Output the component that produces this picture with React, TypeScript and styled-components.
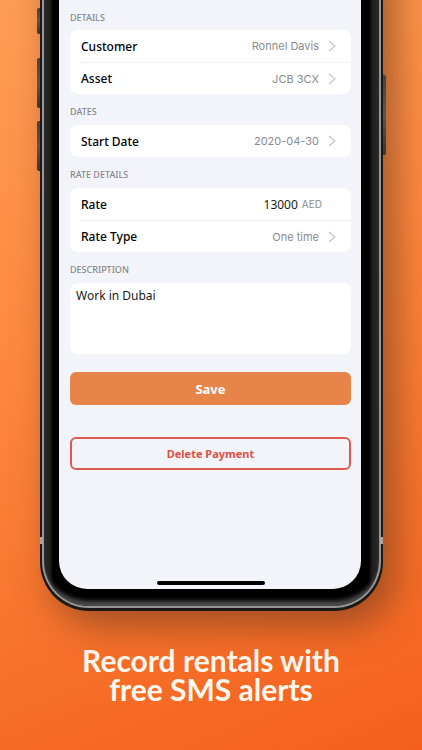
import React from "react";
import styled, { createGlobalStyle } from "styled-components";

const GlobalStyle = createGlobalStyle`
  *, *::before, *::after { box-sizing: border-box; }
  body { margin: 0; background: #f4651f; }
  button, input, textarea { font: inherit; color: inherit; margin: 0; }
`;

const labelFont = `"Noto Sans", "Open Sans", sans-serif`;
const valueFont = `Inter, "Liberation Sans", sans-serif`;

const Page = styled.main`
  min-height: 100vh;
  overflow: hidden;
  background: linear-gradient(158deg, #ff9d54 0%, #fd873c 42%, #f76f29 76%, #f4601c 100%);
  font-family: ${labelFont};
`;

/* The body runs on past the top of the page, so its shadow does too. */
const Phone = styled.div`
  position: relative;
  margin: -60px 39px 0 40px;
  padding: 60px 2px 3px;
  border-radius: 0 0 49px 49px;
  background: #1b1816;
  box-shadow: 12px 14px 36px 0 rgba(120, 64, 32, 0.68);
`;

const Rail = styled.div`
  padding: 0 2px 2px;
  border-radius: 0 0 47px 47px;
  background: #969696;
`;

const Bezel = styled.div`
  padding: 0 18px 17px 15px;
  border-radius: 0 0 45px 45px;
  background: linear-gradient(
    to right,
    #2a2a2a 0,
    #1e1e1e 6px,
    #000 9px,
    #000 calc(100% - 10px),
    #1e1e1e calc(100% - 7px),
    #2a2a2a 100%
  );
  box-shadow: inset 0 -9px 4px -4px #4c4c4c;
`;

const Screen = styled.div`
  padding: 0 10px 4px 11px;
  border-radius: 0 0 28px 28px;
  background: #f3f4f9;
`;

const SideButton = styled.span<{ $side: "left" | "right"; $top: number; $length: number }>`
  position: absolute;
  ${({ $side }) => $side}: -3px;
  top: ${({ $top }) => $top + 60}px;
  width: 3px;
  height: ${({ $length }) => $length}px;
  border-radius: ${({ $side }) => ($side === "left" ? "2px 0 0 2px" : "0 2px 2px 0")};
  background: linear-gradient(#45413e, #5a5653 50%, #38332f);
`;

const AntennaBand = styled.span<{ $side: "left" | "right" }>`
  position: absolute;
  ${({ $side }) => $side}: 0;
  bottom: 67px;
  width: 3px;
  height: 7px;
  background: #a9a5a1;
`;

const Heading = styled.h2`
  margin: 0;
  padding-top: 11px;
  height: 31px;
  font-size: 9px;
  line-height: 13px;
  font-weight: 500;
  color: #85868c;
`;

const FirstHeading = styled(Heading)`
  height: 30px;
`;

const Card = styled.div`
  padding-left: 11px;
  border-radius: 8px;
  background: #fff;
`;

const rowStyles = `
  display: flex;
  align-items: center;
  width: 100%;
  height: 32px;
  padding: 0 15px 0 0;
  border: 0;
  background: none;
  text-align: left;
  & + & { border-top: 1px solid #eeeef1; }
`;

const RowButton = styled.button`
  ${rowStyles}
  cursor: pointer;
`;

const RowField = styled.label`
  ${rowStyles}
  & + ${RowButton} { border-top: 1px solid #eeeef1; }
`;

const RowLabel = styled.span`
  flex: 1;
  font-size: 12px;
  font-weight: 500;
  color: #000;
`;

const RowValue = styled.span`
  margin-right: 9px;
  font-family: ${valueFont};
  font-size: 11px;
  color: #8a8a8e;
`;

const RateInput = styled.input`
  width: 80px;
  padding: 0;
  border: 0;
  outline: 0;
  background: none;
  font-size: 12px;
  text-align: right;
  color: #1a1a1c;
`;

const Unit = styled.span`
  margin: 0 14px 0 4px;
  font-family: ${valueFont};
  font-size: 10px;
  color: #8a8a8e;
`;

const Description = styled.textarea`
  display: block;
  width: 100%;
  height: 71px;
  padding: 4px 6px;
  border: 0;
  border-radius: 8px;
  outline: 0;
  resize: none;
  background: #fff;
  font-size: 12px;
  line-height: 17px;
  color: #1a1a1c;
`;

const ActionButton = styled.button<{ $variant: "primary" | "danger" }>`
  display: block;
  width: 100%;
  height: 33px;
  margin-top: ${({ $variant }) => ($variant === "primary" ? 18 : 32)}px;
  padding: 0;
  border: ${({ $variant }) => ($variant === "primary" ? "0" : "2px solid #dc5a50")};
  border-radius: 6px;
  background: ${({ $variant }) => ($variant === "primary" ? "#e68449" : "transparent")};
  color: ${({ $variant }) => ($variant === "primary" ? "#fff" : "#dc4f45")};
  font-size: ${({ $variant }) => ($variant === "primary" ? 13 : 11)}px;
  font-weight: 700;
  cursor: pointer;
`;

const HomeIndicator = styled.div`
  width: 108px;
  height: 4px;
  margin: 111px auto 0;
  border-radius: 2px;
  background: #000;
`;

const Headline = styled.h1`
  margin: 35px 20px 0;
  font-family: Lato, "Open Sans", sans-serif;
  font-size: 30px;
  line-height: 29px;
  font-weight: 700;
  text-align: center;
  color: #fff8ef;
`;

const Chevron = () => (
  <svg width="8" height="12" viewBox="0 0 8 12" fill="none" aria-hidden="true">
    <path d="M1 1l6 5-6 5" stroke="#c3c3c7" strokeWidth="1.1" />
  </svg>
);

const PickerRow = ({ label, value }: { label: string; value: string }) => (
  <RowButton type="button">
    <RowLabel>{label}</RowLabel>
    <RowValue>{value}</RowValue>
    <Chevron />
  </RowButton>
);

export default function App() {
  return (
    <Page>
      <GlobalStyle />
      <Phone>
        <SideButton $side="left" $top={8} $length={26} />
        <SideButton $side="left" $top={58} $length={50} />
        <SideButton $side="left" $top={121} $length={50} />
        <SideButton $side="right" $top={75} $length={80} />
        <AntennaBand $side="left" />
        <AntennaBand $side="right" />
        <Rail>
          <Bezel>
            <Screen>
              <FirstHeading>DETAILS</FirstHeading>
              <Card>
                <PickerRow label="Customer" value="Ronnel Davis" />
                <PickerRow label="Asset" value="JCB 3CX" />
              </Card>
              <Heading>DATES</Heading>
              <Card>
                <PickerRow label="Start Date" value="2020-04-30" />
              </Card>
              <Heading>RATE DETAILS</Heading>
              <Card>
                <RowField>
                  <RowLabel>Rate</RowLabel>
                  <RateInput type="text" inputMode="numeric" defaultValue="13000" />
                  <Unit>AED</Unit>
                </RowField>
                <PickerRow label="Rate Type" value="One time" />
              </Card>
              <Heading id="description-heading">DESCRIPTION</Heading>
              <Description aria-labelledby="description-heading" defaultValue="Work in Dubai" />
              <ActionButton type="button" $variant="primary">Save</ActionButton>
              <ActionButton type="button" $variant="danger">Delete Payment</ActionButton>
              <HomeIndicator />
            </Screen>
          </Bezel>
        </Rail>
      </Phone>
      <Headline>
        Record rentals with
        <br />
        free SMS alerts
      </Headline>
    </Page>
  );
}
